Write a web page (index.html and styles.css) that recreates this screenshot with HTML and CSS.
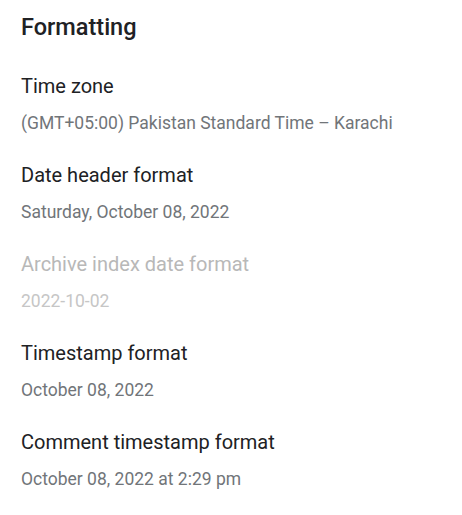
FILE: index.html
```html
<!DOCTYPE html>
<html>
<head>
<meta charset="utf-8">
<link rel="stylesheet" href="styles.css">
</head>
<body>
<div class="panel">
  <h2 class="title">Formatting</h2>
  <div class="item">
    <div class="label">Time zone</div>
    <div class="value">(GMT+05:00) Pakistan Standard Time – Karachi</div>
  </div>
  <div class="item">
    <div class="label">Date header format</div>
    <div class="value">Saturday, October 08, 2022</div>
  </div>
  <div class="item disabled">
    <div class="label">Archive index date format</div>
    <div class="value">2022-10-02</div>
  </div>
  <div class="item">
    <div class="label">Timestamp format</div>
    <div class="value">October 08, 2022</div>
  </div>
  <div class="item">
    <div class="label">Comment timestamp format</div>
    <div class="value">October 08, 2022 at 2:29 pm</div>
  </div>
</div>
</body>
</html>
```

FILE: styles.css
```css
html, body {
  margin: 0;
  padding: 0;
  background: #ffffff;
}
body {
  font-family: Roboto, "Liberation Sans", sans-serif;
}
.panel {
  padding: 12px 21px 0 21px;
  display: flex;
  flex-direction: column;
}
.title {
  margin: 0 0 4px 0;
  font-size: 23.5px;
  font-weight: 500;
  line-height: 30px;
  color: #202124;
}
.item {
  display: flex;
  flex-direction: column;
  gap: 13px;
  margin-top: 28px;
}
.label {
  font-size: 20px;
  line-height: 24px;
  color: #202124;
}
.value {
  font-size: 17.5px;
  line-height: 24px;
  color: #717579;
}
.disabled .label {
  color: #b8b8b8;
}
.disabled .value {
  color: #c6c6c6;
}
```
